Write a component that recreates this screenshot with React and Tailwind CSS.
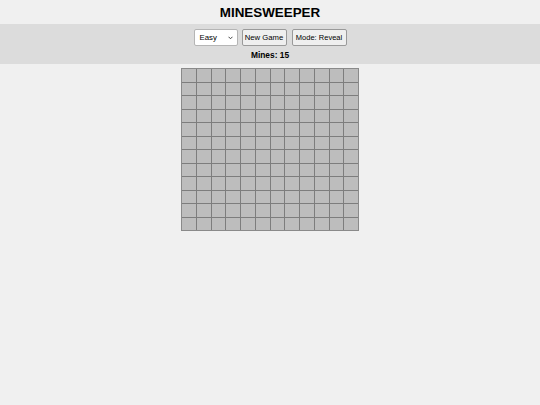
import React from 'react';

const ROWS = 12;
const COLS = 12;

export default function App() {
    const cells = Array.from({ length: ROWS * COLS });

    return (
        <div className="min-h-[405px] w-[540px] bg-[#f0f0f0] text-black" style={{ fontFamily: '"Liberation Sans", Arial, sans-serif' }}>
            <h1 className="h-[24px] flex items-center justify-center text-[13.4px] font-bold leading-none pt-[1px]">MINESWEEPER</h1>

            {/* Controls */}
            <div className="bg-[#dcdcdc] h-[40px] flex flex-col items-center pt-[5px]">
                <div className="flex items-center gap-[4px] h-[17px]">
                    <div className="relative w-[44px] h-[17px] bg-white border border-[#b5b5b5] rounded-[2px] flex items-center pl-[5px] text-[7.8px]">
                        Easy
                        <svg className="absolute right-[4px] top-[6px] w-[5px] h-[4px]" viewBox="0 0 10 7" fill="none" stroke="#444" strokeWidth="2">
                            <path d="M1 1l4 4 4-4" />
                        </svg>
                    </div>
                    <button className="h-[17px] w-[45px] bg-[#efefef] border border-[#9a9a9a] rounded-[2px] text-[7.7px] leading-none whitespace-nowrap px-0">New Game</button>
                    <button className="h-[17px] w-[55px] bg-[#efefef] border border-[#9a9a9a] rounded-[2px] text-[7.5px] leading-none whitespace-nowrap px-0 ml-[1px]">Mode: Reveal</button>
                </div>
                <div className="mt-[5px] text-[8.4px] font-bold leading-none">Mines: 15</div>
            </div>

            {/* Board */}
            <div className="flex justify-center pt-[4px]">
                <div className="grid grid-cols-12 gap-px bg-[#7d7d7d] border border-[#8a8a8a] w-[178px] h-[163px]">
                    {cells.map((_, i) => (
                        <div key={i} className="bg-[#bdbdbd]" />
                    ))}
                </div>
            </div>
        </div>
    );
}
